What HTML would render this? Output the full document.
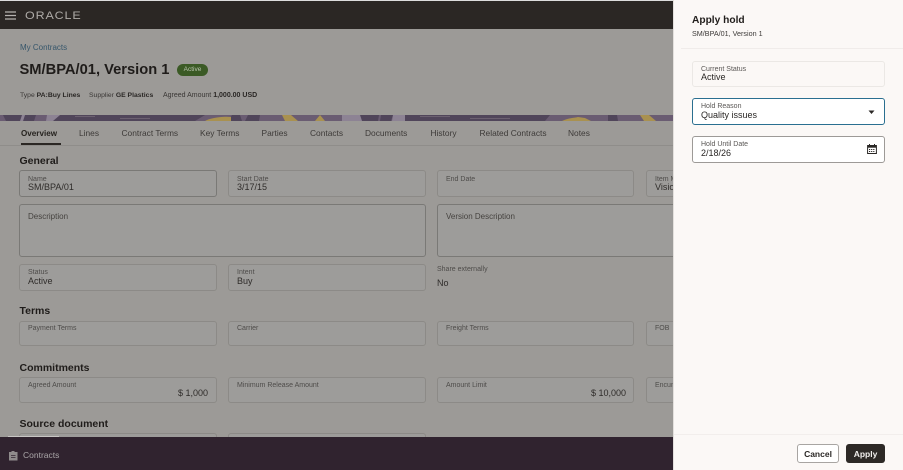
<!DOCTYPE html>
<html>
<head>
<meta charset="utf-8">
<style>
html,body{margin:0;padding:0;width:903px;height:470px;overflow:hidden;background:#9c9a97}
body{font-family:"Liberation Sans",sans-serif;position:relative}
#w{position:absolute;left:0;top:0;width:903px;height:470px;overflow:hidden;filter:blur(.35px)}
#w div{position:absolute;white-space:nowrap}
.f{box-sizing:border-box;border:1px solid #8c8a87;border-radius:3px;background:#9d9c9a}
.s{border-color:#7a7976}
.l{font-size:7px;color:#4e4c4a;line-height:9px;margin-top:1px}
.v{font-size:9px;color:#2f2c2a;line-height:11px;margin-top:1px}
.h{font-size:10.5px;font-weight:bold;color:#1f1c1a;line-height:13px;margin-top:1px}
.t{font-size:8.4px;color:#3d3a38;line-height:11px;top:128px}
.m{font-size:6.8px;color:#3a3735;line-height:9px;top:91px}
.m b{font-weight:bold;color:#2a2725}
.p{box-sizing:border-box;border-radius:3px}
</style>
</head>
<body>
<div id="w">
<div style="left:0;top:0;width:674px;height:1px;background:#ddd"></div>
<div style="left:0;top:1px;width:674px;height:28px;background:#2b2724"></div>
<svg style="position:absolute;left:5px;top:11px" width="12" height="9"><path d="M0 1h11M0 4.500h11M0 8h11" stroke="#b5b2ae" stroke-width="1.200"/></svg>
<div style="left:25px;top:9.500px;font-size:11px;letter-spacing:.8px;color:#aeaba7;line-height:13px;transform:scaleX(1.13);transform-origin:0 0">ORACLE</div>

<div style="left:20px;top:43px;font-size:8px;line-height:10px;color:#36566b">My Contracts</div>
<div style="left:19.500px;top:61px;font-size:14.700px;font-weight:bold;color:#1f1c1a;line-height:18px">SM/BPA/01, Version 1</div>
<div style="left:177px;top:64px;width:31px;height:12px;border-radius:6px;background:#3b5a25;color:#b9c4ad;font-size:6.500px;line-height:12px;text-align:center">Active</div>
<div class="m" style="left:20px">Type <b>PA:Buy Lines</b></div>
<div class="m" style="left:89px">Supplier <b>GE Plastics</b></div>
<div class="m" style="left:163px;font-size:7px">Agreed Amount <b>1,000.00 USD</b></div>

<svg style="position:absolute;left:0;top:115px" width="674" height="6" viewBox="0 0 674 6">
<rect width="674" height="6" fill="#6a5c72"/>
<path d="M3 0h19l-1 6H6zM25 0h11l-2 6H23zM60 0h145l-10 6H52zM232 0h8l2 6h-14zM248 0h12l-1 6h-14zM360 0h19l-1 6h-16zM381 0h12l-2 6h-11zM405 0h145l-5 6H405zM608 0h9l1 6h-10z" fill="#50455a"/>
<path d="M75 1h20v1H75zM120 3h30v1h-30zM420 1h30v1h-30zM470 3h40v1h-40z" fill="#6b6070"/>
<path d="M22 0h3l-2 6h-3zM47 0h13l-7 6H46zM342 0h18l2 6h-20zM393 0h12v6h-13z" fill="#8d8394"/>
<path d="M205 6c5-3 17-5 26-4v4zM282 0h9l7 6h-13zM315 6l5-6 5 6zM562 6c6-3 12-3 16-4l7 1 6 3zM640 0h9l7 6h-12z" fill="#a99150"/>
</svg>

<div class="t" style="left:21px;font-size:8.100px;font-weight:bold;color:#26231f">Overview</div>
<div style="left:21px;top:143px;width:40px;height:2px;background:#2b2724"></div>
<div class="t" style="left:79px">Lines</div>
<div class="t" style="left:121.500px">Contract Terms</div>
<div class="t" style="left:200px">Key Terms</div>
<div class="t" style="left:261.500px">Parties</div>
<div class="t" style="left:310px">Contacts</div>
<div class="t" style="left:365px">Documents</div>
<div class="t" style="left:430.500px">History</div>
<div class="t" style="left:479.500px">Related Contracts</div>
<div class="t" style="left:568px">Notes</div>
<div style="left:0;top:145px;width:674px;height:1px;background:#8f8d8a"></div>

<div class="h" style="left:19.500px;top:154px">General</div>
<div class="f s" style="left:19px;top:170px;width:198px;height:27px"></div>
<div class="l" style="left:28px;top:174px">Name</div>
<div class="v" style="left:28px;top:181px">SM/BPA/01</div>
<div class="f" style="left:228px;top:170px;width:198px;height:27px"></div>
<div class="l" style="left:237px;top:174px">Start Date</div>
<div class="v" style="left:237px;top:181px">3/17/15</div>
<div class="f" style="left:437px;top:170px;width:197px;height:27px"></div>
<div class="l" style="left:446px;top:174px">End Date</div>
<div class="f" style="left:646px;top:170px;width:40px;height:27px"></div>
<div class="l" style="left:655px;top:174px">Item M</div>
<div class="v" style="left:655px;top:181px">Vision</div>

<div class="f s" style="left:19px;top:204px;width:407px;height:53px"></div>
<div class="v" style="left:28px;top:210px;font-size:8px;color:#45423f">Description</div>
<div class="f s" style="left:437px;top:204px;width:250px;height:53px"></div>
<div class="v" style="left:446px;top:210px;font-size:8px;color:#45423f">Version Description</div>

<div class="f" style="left:19px;top:264px;width:198px;height:27px"></div>
<div class="l" style="left:28px;top:267px">Status</div>
<div class="v" style="left:28px;top:275px">Active</div>
<div class="f" style="left:228px;top:264px;width:198px;height:27px"></div>
<div class="l" style="left:237px;top:267px">Intent</div>
<div class="v" style="left:237px;top:275px">Buy</div>
<div class="l" style="left:437px;top:264px">Share externally</div>
<div class="v" style="left:437px;top:277px">No</div>

<div class="h" style="left:19.500px;top:304px">Terms</div>
<div class="f" style="left:19px;top:321px;width:198px;height:25px"></div>
<div class="l" style="left:28px;top:323px">Payment Terms</div>
<div class="f" style="left:228px;top:321px;width:198px;height:25px"></div>
<div class="l" style="left:237px;top:323px">Carrier</div>
<div class="f" style="left:437px;top:321px;width:197px;height:25px"></div>
<div class="l" style="left:446px;top:323px">Freight Terms</div>
<div class="f" style="left:646px;top:321px;width:40px;height:25px"></div>
<div class="l" style="left:655px;top:323px">FOB</div>

<div class="h" style="left:19.500px;top:361px">Commitments</div>
<div class="f" style="left:19px;top:377px;width:198px;height:26px"></div>
<div class="l" style="left:28px;top:380px">Agreed Amount</div>
<div class="v" style="left:150px;width:58px;text-align:right;top:387px">$ 1,000</div>
<div class="f" style="left:228px;top:377px;width:198px;height:26px"></div>
<div class="l" style="left:237px;top:380px">Minimum Release Amount</div>
<div class="f" style="left:437px;top:377px;width:197px;height:26px"></div>
<div class="l" style="left:446px;top:380px">Amount Limit</div>
<div class="v" style="left:560px;width:66px;text-align:right;top:387px">$ 10,000</div>
<div class="f" style="left:646px;top:377px;width:40px;height:26px"></div>
<div class="l" style="left:655px;top:380px">Encum</div>

<div class="h" style="left:19.500px;top:417px">Source document</div>
<div class="f" style="left:19px;top:433px;width:198px;height:12px"></div>
<div class="f" style="left:228px;top:433px;width:198px;height:12px"></div>
<div style="left:8px;top:436px;width:51px;height:1px;background:#c8c6c4"></div>
<div style="left:0;top:437px;width:674px;height:33px;background:#30232f"></div>
<svg style="position:absolute;left:8px;top:450px" width="11" height="11" viewBox="0 0 11 11"><path d="M1 2h2.500V1h3v1H9.500v8.500H1z" fill="#8f8b8c"/><path d="M3 5.500h4.500M3 7.500h4.500" stroke="#4a3f49" stroke-width="1"/></svg>
<div style="left:23px;top:450px;font-size:8.500px;line-height:11px;color:#aaa6a8">Contracts</div>

<!-- Drawer -->
<div style="left:673px;top:0;width:1px;height:470px;background:#e3e0dd"></div>
<div style="left:674px;top:0;width:229px;height:470px;background:#fbf8f6"></div>
<div style="left:692px;top:14px;font-size:10.200px;font-weight:bold;line-height:13px;color:#201d1b">Apply hold</div>
<div style="left:692px;top:29px;font-size:7.200px;line-height:9px;color:#3d3a38">SM/BPA/01, Version 1</div>
<div style="left:681px;top:48px;width:222px;height:1px;background:#f0ecea"></div>

<div class="p" style="left:692px;top:61px;width:193px;height:26px;border:1px solid #ebe8e5;background:#fbf8f6"></div>
<div class="l" style="left:701px;top:63.500px;color:#5a5755">Current Status</div>
<div class="v" style="left:701px;top:71px;color:#2a2725">Active</div>

<div class="p" style="left:692px;top:98px;width:193px;height:27px;border:1px solid #2a6f90;background:#fff"></div>
<div class="l" style="left:701px;top:101px;color:#5a5755">Hold Reason</div>
<div class="v" style="left:701px;top:109px;color:#2a2725">Quality issues</div>
<svg style="position:absolute;left:868px;top:109.500px" width="7" height="5"><path d="M.5 .5h6L3.500 4z" fill="#2a2725"/></svg>

<div class="p" style="left:692px;top:136px;width:193px;height:27px;border:1px solid #9d9a97;background:#fff"></div>
<div class="l" style="left:701px;top:139px;color:#5a5755">Hold Until Date</div>
<div class="v" style="left:701px;top:147px;color:#2a2725">2/18/26</div>
<svg style="position:absolute;left:866.500px;top:144px" width="10" height="10" viewBox="0 0 10 10"><rect x=".6" y="1.500" width="8.800" height="8" fill="none" stroke="#2a2725"/><rect x=".6" y="1.500" width="8.800" height="2.200" fill="#2a2725"/><path d="M2.500 0v2M7.500 0v2" stroke="#2a2725"/><path d="M2 5.500h6M2 7.500h6" stroke="#2a2725" stroke-dasharray="1.200 .9"/></svg>

<div style="left:674px;top:434px;width:229px;height:1px;background:#f2eeec"></div>
<div class="p" style="left:797px;top:444px;width:42px;height:19px;border:1px solid #a8a5a2;background:#fff;color:#2a2725;font-size:8.500px;font-weight:bold;line-height:18px;text-align:center">Cancel</div>
<div class="p" style="left:846px;top:444px;width:39px;height:19px;background:#2d2926;color:#f2f0ee;font-size:8.500px;font-weight:bold;line-height:20px;text-align:center">Apply</div>
</div>
</body>
</html>
